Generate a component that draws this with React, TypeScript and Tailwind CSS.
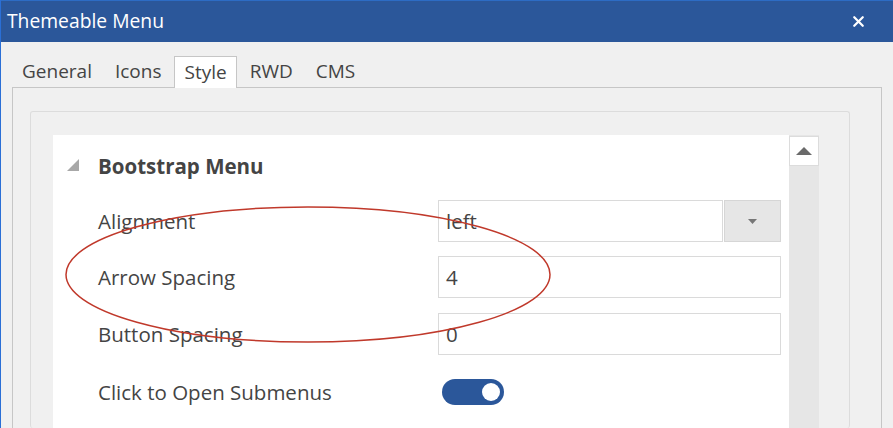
import { X } from "lucide-react";

const font = { fontFamily: '"Open Sans", "Noto Sans", sans-serif' };

function TextInput({ value }: { value: string }) {
  return (
    <div className="flex h-[42px] flex-1 items-center border border-[#dadada] bg-white pl-[7px] text-[20.5px] text-[#444]">
      {value}
    </div>
  );
}

export default function App() {
  const tabs = ["General", "Icons", "Style", "RWD", "CMS"];

  return (
    <div
      className="relative flex h-[428px] w-[893px] flex-col overflow-hidden border-l border-[#2a6fd6] bg-[#f0f0f0]"
      style={font}
    >
      {/* Title bar */}
      <div className="flex h-[42px] shrink-0 items-center justify-between border-t border-[#2d6cc4] bg-[#2b579a] pl-[6px] pr-[26px]">
        <span className="text-[19.3px] text-white">Themeable Menu</span>
        <X className="h-[17px] w-[17px] text-white" strokeWidth={3.2} />
      </div>

      {/* Body */}
      <div className="flex flex-1 flex-col pl-[11px] pr-[11px] pt-[14px]">
        {/* Tabs */}
        <div className="flex h-[31px] items-end gap-[3px]">
          {tabs.map((t) =>
            t === "Style" ? (
              <div
                key={t}
                className="relative z-10 -mb-px flex h-[32px] items-center border border-b-0 border-[#c6c6c6] bg-white px-[9px] text-[19px] text-[#444]"
              >
                {t}
              </div>
            ) : (
              <div key={t} className="flex h-[31px] items-center px-[10px] text-[19px] text-[#444]">
                {t}
              </div>
            )
          )}
        </div>

        {/* Tab panel */}
        <div className="flex flex-1 flex-col border border-b-0 border-[#c6c6c6] bg-[#f0f0f0] pl-[17px] pr-[31px] pt-[23px]">
          <div className="flex flex-1 rounded-[3px] border border-b-0 border-[#dcdcdc] bg-[#f0f0f0] pl-[22px] pr-[30px] pt-[23px]">
            {/* Content */}
            <div className="flex flex-1 flex-col bg-white pl-[45px] pr-[8px] pt-[17px]">
              <div className="relative flex h-[28px] items-center">
                <svg className="absolute -left-[31px] top-[7px]" width="12" height="12" viewBox="0 0 12 12">
                  <polygon points="12,0 12,12 0,12" fill="#a8a8a8" />
                </svg>
                <span className="text-[20.5px] font-bold text-[#444]">Bootstrap Menu</span>
              </div>

              <div className="mt-[20px] flex items-center">
                <span className="w-[340px] text-[20.5px] text-[#444]">Alignment</span>
                <div className="flex flex-1 gap-[1px]">
                  <TextInput value="left" />
                  <div className="flex h-[42px] w-[57px] items-center justify-center border border-[#d6d6d6] bg-[#e6e6e6]">
                    <svg width="9" height="5" viewBox="0 0 9 5">
                      <polygon points="0,0 9,0 4.5,5" fill="#777" />
                    </svg>
                  </div>
                </div>
              </div>

              <div className="mt-[14px] flex items-center">
                <span className="w-[340px] text-[20.5px] text-[#444]">Arrow Spacing</span>
                <TextInput value="4" />
              </div>

              <div className="mt-[15px] flex items-center">
                <span className="w-[340px] text-[20.5px] text-[#444]">Button Spacing</span>
                <TextInput value="0" />
              </div>

              <div className="mt-[22px] flex items-center">
                <span className="w-[344px] text-[20.5px] text-[#444]">Click to Open Submenus</span>
                <div className="flex h-[26px] w-[62px] items-center justify-end rounded-full bg-[#2b579a] pr-[4px]">
                  <div className="h-[18px] w-[18px] rounded-full bg-white" />
                </div>
              </div>
            </div>

            {/* Scrollbar */}
            <div className="flex w-[30px] flex-col bg-[#e6e6e6] pt-[1px]">
              <div className="flex h-[30px] items-center justify-center border border-[#dcdcdc] bg-white">
                <svg width="16" height="8" viewBox="0 0 16 8">
                  <polygon points="0,8 16,8 8,0" fill="#6a6a6a" />
                </svg>
              </div>
            </div>
          </div>
        </div>
      </div>

      {/* Red annotation ellipse */}
      <svg className="pointer-events-none absolute left-0 top-0" width="893" height="428">
        <ellipse cx="307" cy="274.5" rx="242" ry="67.5" fill="none" stroke="#c0392b" strokeWidth="1.5" />
      </svg>
    </div>
  );
}
